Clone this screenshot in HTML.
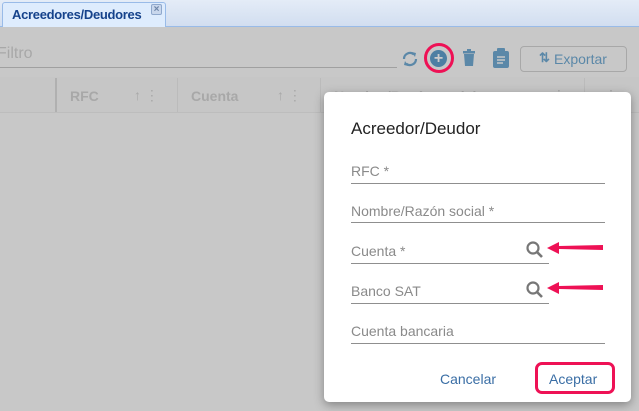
<!DOCTYPE html>
<html><head><meta charset="utf-8"><style>
*{margin:0;padding:0;box-sizing:border-box}
body{width:639px;height:411px;overflow:hidden;background:#c8c8c8;font-family:"Liberation Sans",sans-serif;position:relative}
.a{position:absolute}
.tabbar{left:0;top:0;width:639px;height:27px;background:linear-gradient(#e4ecf7,#d2def0);border-bottom:1px solid #99bbe8}
.tab{left:2px;top:2px;width:164px;height:25px;background:#deecfd;border:1px solid #99bbe8;border-bottom:none;border-radius:3px 3px 0 0;font-weight:bold;font-size:13px;color:#15428b;padding:4px 0 0 9px;letter-spacing:-0.3px}
.x{left:151px;top:4px;width:11px;height:11px;border:1px solid #8fa8cc;border-radius:2px;background:#c9d7ec;font-size:10px;color:#6d85a8;text-align:center;line-height:9px;font-weight:bold}
.g{color:#a8a8a8}
.lbl{font-size:14px;color:#8a8a8a}
.ul{height:1px;background:#8f8f8f}
</style></head><body>
<div class="a tabbar"></div>
<div class="a tab">Acreedores/Deudores</div>
<div class="a x">×</div>
<div class="a g" style="left:-3px;top:45px;font-size:16px">Filtro</div>
<div class="a" style="left:0;top:67px;width:397px;height:1px;background:#a0a0a0"></div>
<svg class="a" style="left:400px;top:48px" width="20" height="22" viewBox="0 0 20 22"><path d="M4 11a6 6 0 0 1 10-4.5M16 11a6 6 0 0 1-10 4.5" stroke="#5b88a8" stroke-width="2.2" fill="none"/><path d="M12 4l4 1-1 4z M8 18l-4-1 1-4z" fill="#5b88a8"/></svg>
<div class="a" style="left:424px;top:43px;width:30px;height:30px;border:3px solid #ee1155;border-radius:50%"></div>
<div class="a" style="left:430px;top:50px;width:17px;height:17px;border-radius:50%;background:#4d7fa3;color:#ccc;font-weight:bold;font-size:16px;line-height:17px;text-align:center">+</div>
<svg class="a" style="left:462px;top:49px" width="14" height="18"><rect x="1" y="2" width="12" height="2.5" fill="#5b88a8"/><rect x="5" y="0" width="4" height="2" fill="#5b88a8"/><path d="M2 5h10l-1 12H3z" fill="#5b88a8"/></svg>
<svg class="a" style="left:492px;top:48px" width="18" height="20"><rect x="1" y="3" width="16" height="17" rx="2" fill="#5b88a8"/><rect x="5" y="0" width="8" height="5" rx="1" fill="#5b88a8"/><path d="M5 9h8M5 12h8M5 15h6" stroke="#c8c8c8" stroke-width="1.5"/></svg>
<div class="a" style="left:520px;top:46px;width:107px;height:26px;border:1px solid #a8a8a8;border-radius:4px;color:#5b88a8;font-size:14px;padding:4px 0 0 33px">Exportar</div>
<div class="a" style="left:539px;top:50px;color:#5b88a8;font-size:13px;font-weight:bold">⇅</div>
<div class="a" style="left:0;top:77px;width:639px;height:36px;border-bottom:1px solid #bdbdbd;background:#c6c6c6"></div>
<div class="a" style="left:55px;top:78px;width:2px;height:34px;background:#b0b0b0"></div>
<div class="a" style="left:177px;top:78px;width:1px;height:34px;background:#bbb"></div>
<div class="a" style="left:320px;top:78px;width:1px;height:34px;background:#bbb"></div>
<div class="a" style="left:584px;top:78px;width:1px;height:34px;background:#bbb"></div>
<div class="a g" style="left:70px;top:88px;font-size:14px;font-weight:bold">RFC</div>
<div class="a g" style="left:134px;top:87px;font-size:14px">↑ ⋮</div>
<div class="a g" style="left:191px;top:88px;font-size:14px;font-weight:bold">Cuenta</div>
<div class="a g" style="left:277px;top:87px;font-size:14px">↑ ⋮</div>
<div class="a g" style="left:334px;top:88px;font-size:14px;font-weight:bold">Nombre/Razón social</div>
<div class="a g" style="left:541px;top:87px;font-size:14px">↑ ⋮</div>
<div class="a g" style="left:604px;top:87px;font-size:14px">⋮ ↑</div>
<div class="a" style="left:324px;top:92px;width:307px;height:310px;background:#fff;border-radius:5px;box-shadow:0 3px 10px rgba(0,0,0,.35)"></div>
<div class="a" style="left:351px;top:119px;font-size:17px;color:#222">Acreedor/Deudor</div>
<div class="a lbl" style="left:351px;top:163px">RFC *</div>
<div class="a ul" style="left:351px;top:183px;width:254px"></div>
<div class="a lbl" style="left:351px;top:203px">Nombre/Razón social *</div>
<div class="a ul" style="left:351px;top:222px;width:254px"></div>
<div class="a lbl" style="left:351px;top:243px">Cuenta *</div>
<div class="a ul" style="left:351px;top:263px;width:198px"></div>
<div class="a lbl" style="left:351px;top:283px">Banco SAT</div>
<div class="a ul" style="left:351px;top:303px;width:198px"></div>
<div class="a lbl" style="left:351px;top:323px">Cuenta bancaria</div>
<div class="a ul" style="left:351px;top:343px;width:254px"></div>
<svg class="a" style="left:525px;top:240px" width="80" height="20"><circle cx="8" cy="8" r="5.5" stroke="#777" stroke-width="2.2" fill="none"/><path d="M12 12l5 5" stroke="#777" stroke-width="2.6"/><path d="M22 8l12-6v4l44-1v5l-44-1v5z" fill="#ee1155"/></svg>
<svg class="a" style="left:525px;top:280px" width="80" height="20"><circle cx="8" cy="8" r="5.5" stroke="#777" stroke-width="2.2" fill="none"/><path d="M12 12l5 5" stroke="#777" stroke-width="2.6"/><path d="M22 8l12-6v4l44-1v5l-44-1v5z" fill="#ee1155"/></svg>
<div class="a" style="left:440px;top:371px;font-size:14px;color:#3a6ea5">Cancelar</div>
<div class="a" style="left:535px;top:362px;width:80px;height:32px;border:3px solid #ee1155;border-radius:7px"></div>
<div class="a" style="left:549px;top:371px;font-size:14px;color:#3a6ea5">Aceptar</div>
</body></html>
